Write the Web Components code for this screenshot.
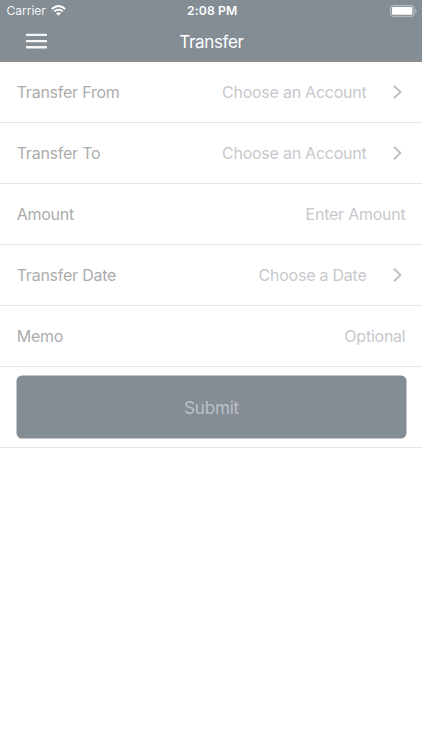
<!DOCTYPE html>
<html lang="en">
<head>
<meta charset="utf-8">
<title>Transfer</title>
<style>
html,body{margin:0;height:100%;background:#fff}
body{font-family:Inter,"Liberation Sans",sans-serif;overflow:hidden}
</style>
</head>
<body>
<transfer-screen></transfer-screen>
<script>
const define=(name,html)=>customElements.define(name,class extends HTMLElement{
  constructor(){super();this.attachShadow({mode:'open'}).innerHTML=html;}
});

define('status-bar',`<style>
:host{display:grid;grid-template-columns:1fr auto 1fr;align-items:center;height:22px;color:#fff;padding:0 5px 0 6.5px;box-sizing:border-box;line-height:22px}
.left{display:flex;align-items:center;gap:5.5px;font-size:12px;letter-spacing:0;color:#f4f5f6;line-height:22px}
.time{font-size:12.2px;font-weight:600;letter-spacing:.15px;padding:0 0 0 1px;line-height:22px}
svg{display:block}
.left svg{margin-top:-1px}
.battery{justify-self:end;margin-top:-1px}
</style>
<div class="left"><span>Carrier</span>
<svg width="15" height="11" viewBox="0 0 15 11" fill="none" stroke="#fff" stroke-width="1.8"><path d="M.8 4Q7.5 -1.9 14.2 4M3.1 6.4Q7.5 2.8 11.9 6.4"/><path d="M5 8.3Q7.5 6.3 10 8.3L7.5 10.8Z" fill="#fff" stroke="none"/></svg></div>
<span class="time">2:08 PM</span>
<svg class="battery" width="27" height="12" viewBox="0 0 27 12"><rect x=".6" y=".6" width="23.4" height="10.8" rx="2.8" fill="none" stroke="#b5babf" stroke-width="1.2"/><rect x="2" y="2" width="20.4" height="7.8" rx="1.2" fill="#fff"/><path d="M25.1 4Q26.8 4.5 26.8 6T25.1 8Z" fill="#b5babf"/></svg>`);

define('nav-bar',`<style>
:host{display:grid;grid-template-columns:1fr auto 1fr;align-items:center;height:39px;color:#fff;box-sizing:border-box}
svg{display:block;margin:-1px 0 0 25.5px}
.title{font-size:17px;line-height:38px;padding:1px 0 0 1px;letter-spacing:-.35px}
</style>
<svg width="21" height="16" viewBox="0 0 21 16" fill="#f4f5f6"><rect y=".7" width="21" height="2.4" rx=".4"/><rect y="6.9" width="21" height="2.4" rx=".4"/><rect y="13" width="21" height="2.4" rx=".4"/></svg>
<span class="title"><slot></slot></span><span></span>`);

define('form-row',`<style>
:host{display:flex;align-items:center;height:61.1px;padding:0 16.5px 0 16.7px;box-sizing:border-box;border-bottom:1px solid #e6e6e7;font-size:16px;line-height:24px;letter-spacing:-.24px}
.label{flex:1;color:#acacad}
.value{color:#c8c8cc}
svg{display:none;margin-left:26.5px;margin-right:3.5px}
:host([chevron]) svg{display:block}
</style>
<span class="label"><slot name="label"></slot></span><span class="value"><slot></slot></span>
<svg width="9" height="14" viewBox="0 0 9 14" fill="none" stroke="#bfbfc2" stroke-width="1.9"><path d="M1 .8L7.4 7L1 13.2"/></svg>`);

define('submit-button',`<style>
:host{display:block;height:80.5px;padding:8px 16px 9px;box-sizing:border-box;border-bottom:1px solid #e6e6e7}
button{display:block;width:100%;height:63px;border:0;border-radius:5.5px;background:#848c94;color:#bcc1c7;font:400 17.1px Inter,"Liberation Sans",sans-serif;letter-spacing:-.2px;padding:0 0 1px;transform:translate(.5px,.5px)}
</style><button><slot></slot></button>`);

define('transfer-screen',`<style>
:host{display:block}
header{background:#848c94;border-bottom:1px solid #8b9095}
</style>
<header><status-bar></status-bar><nav-bar>Transfer</nav-bar></header>
<main>
<form-row chevron><span slot="label">Transfer From</span>Choose an Account</form-row>
<form-row chevron><span slot="label">Transfer To</span>Choose an Account</form-row>
<form-row><span slot="label">Amount</span>Enter Amount</form-row>
<form-row chevron><span slot="label">Transfer Date</span>Choose a Date</form-row>
<form-row><span slot="label">Memo</span>Optional</form-row>
<submit-button>Submit</submit-button>
</main>`);
</script>
</body>
</html>
